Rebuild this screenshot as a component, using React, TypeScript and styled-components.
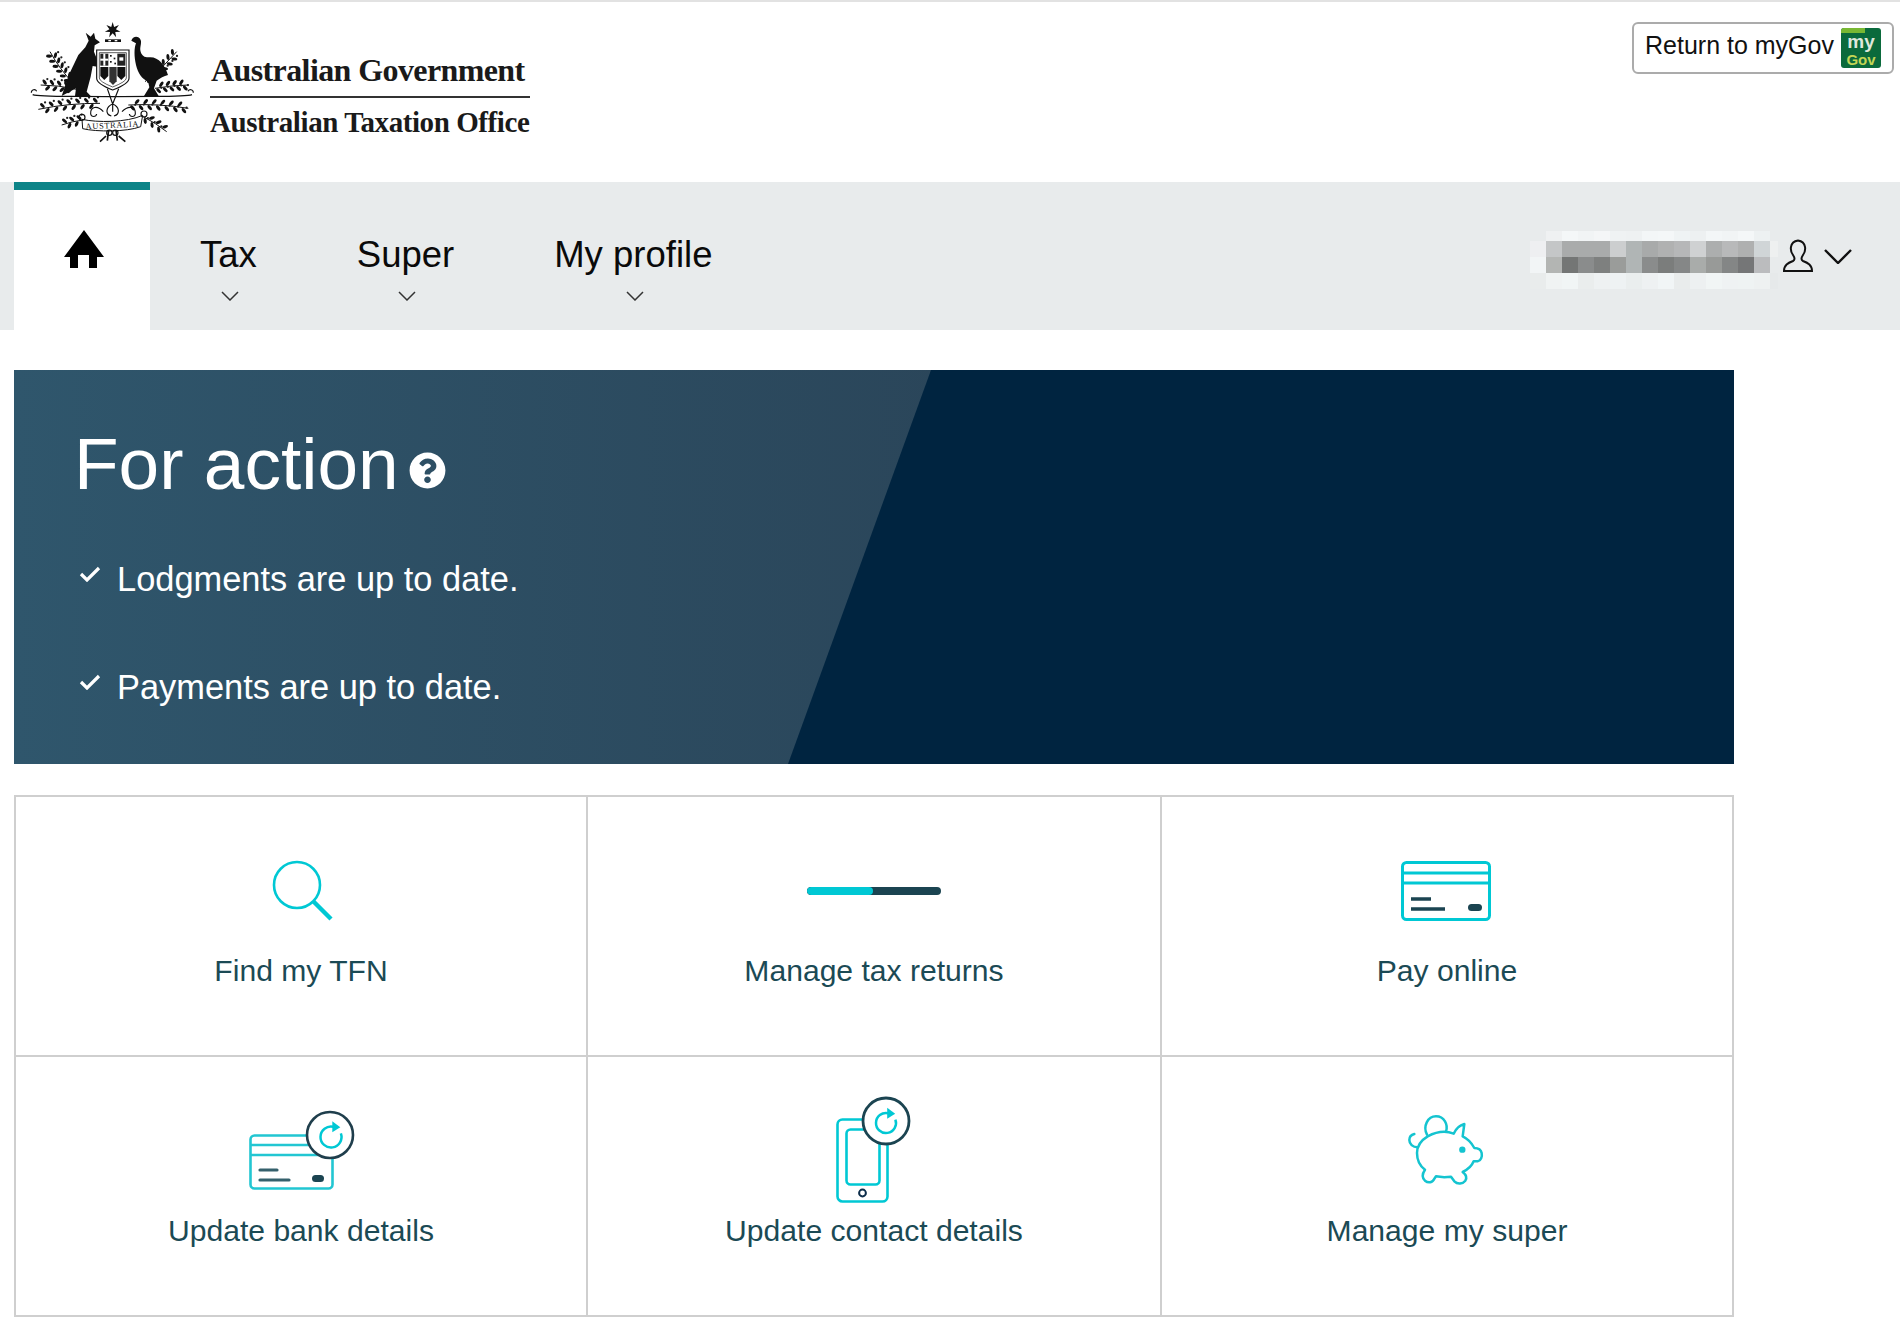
import React from "react";
import styled, { createGlobalStyle } from "styled-components";
import { FaQuestionCircle } from "react-icons/fa";

const GlobalStyle = createGlobalStyle`
  html, body { margin: 0; padding: 0; background: #fff; }
  body { font-family: "Liberation Sans", Arial, sans-serif; }
  * { box-sizing: border-box; }
`;

const CYAN = "#00c8d4";
const DARK = "#1b4451";

const Page = styled.div`
  width: 1900px;
  min-height: 1340px;
  border-top: 2px solid #e2e2e2;
`;

const Header = styled.header`
  height: 180px;
  display: flex;
  justify-content: space-between;
  align-items: flex-start;
  padding-right: 6px;
`;

const Brand = styled.div`
  display: flex;
  align-items: flex-start;
`;

const Crest = styled.svg`
  display: block;
  width: 190px;
  height: 140px;
  margin: 8px 0 0 20px;
`;

const BrandText = styled.div`
  width: 320px;
  padding-top: 50px;
  font-family: "Liberation Serif", "Times New Roman", serif;
  font-weight: 700;
  color: #1a1a1a;
`;

const GovLine = styled.div`
  font-size: 32px;
  letter-spacing: -0.6px;
  line-height: 36px;
  height: 46px;
  padding-left: 1px;
  border-bottom: 2px solid #333;
  white-space: nowrap;
`;

const OfficeLine = styled.div`
  font-size: 29px;
  letter-spacing: -0.42px;
  line-height: 34px;
  margin-top: 7px;
  white-space: nowrap;
`;

const ReturnButton = styled.a`
  margin-top: 20px;
  width: 262px;
  height: 52px;
  display: flex;
  align-items: center;
  justify-content: space-between;
  padding: 0 11px 0 11px;
  border: 2px solid #ababab;
  border-radius: 6px;
  font-size: 25px;
  color: #111;
  white-space: nowrap;
`;

const ReturnText = styled.span`
  margin-bottom: 5px;
`;

const GovBadge = styled.span`
  position: relative;
  width: 40px;
  height: 40px;
  flex: none;
  overflow: hidden;
  border-radius: 3px;
  background: #0b6a3c;
  display: flex;
  flex-direction: column;
  align-items: center;
  justify-content: flex-end;
  padding-bottom: 1px;
  font-weight: 700;
  &::before {
    content: "";
    position: absolute;
    left: 0;
    top: 0;
    width: 24px;
    height: 5px;
    background: #79b833;
  }
`;

const BadgeMy = styled.span`
  font-size: 19px;
  line-height: 20px;
  color: #dfe8dc;
`;

const BadgeGov = styled.span`
  font-size: 15px;
  line-height: 15px;
  color: #c3d655;
`;

const Nav = styled.nav`
  height: 148px;
  background: #e8ebec;
  display: flex;
  padding-left: 14px;
  padding-right: 48px;
`;

const HomeTab = styled.a`
  width: 136px;
  height: 148px;
  background: #fff;
  border-top: 8px solid #0d8488;
  display: flex;
  justify-content: center;
  padding: 40px 0 0 3px;
`;

const NavItem = styled.a`
  display: flex;
  flex-direction: column;
  align-items: center;
  padding: 53px 50px 0 50px;
  font-size: 36.5px;
  line-height: 40px;
  color: #0a0a0a;
  white-space: nowrap;
`;

const NavChevron = styled.svg`
  display: block;
  width: 18px;
  height: 10px;
  margin: 16px 0 0 3px;
`;

const UserArea = styled.div`
  margin-left: auto;
  display: flex;
  align-items: flex-start;
  padding-top: 49px;
`;

const Mosaic = styled.svg`
  display: block;
  width: 248px;
  height: 58px;
`;

const UserIcon = styled.svg`
  display: block;
  width: 30px;
  height: 34px;
  margin: 8px 0 0 5px;
`;

const UserChevron = styled.svg`
  display: block;
  width: 28px;
  height: 15px;
  margin: 18px 0 0 11px;
`;

const Main = styled.main`
  width: 1720px;
  margin-left: 14px;
`;

const Banner = styled.section`
  position: relative;
  height: 394px;
  margin-top: 40px;
  overflow: hidden;
  background: #002440;
  color: #fff;
  padding: 54px 0 0 60px;
  &::before {
    content: "";
    position: absolute;
    inset: 0;
    background: linear-gradient(to right, #2f566c, #2a4458 60%);
    clip-path: polygon(0 0, 917px 0, 774px 100%, 0 100%);
  }
`;

const BannerContent = styled.div`
  position: relative;
`;

const BannerTitle = styled.h1`
  margin: 0;
  display: flex;
  align-items: flex-start;
  font-size: 73px;
  font-weight: 400;
  line-height: 80px;
`;

const HelpIcon = styled(FaQuestionCircle)`
  width: 37px;
  height: 37px;
  margin: 28px 0 0 10px;
`;

const StatusList = styled.ul`
  list-style: none;
  margin: 55px 0 0;
  padding: 0;
  display: flex;
  flex-direction: column;
  gap: 68px;
`;

const StatusRow = styled.li`
  display: flex;
  align-items: flex-start;
  font-size: 34.4px;
  line-height: 40px;
`;

const CheckMark = styled.svg`
  display: block;
  width: 22px;
  height: 16px;
  margin: 7px 16px 0 5px;
`;

const Tiles = styled.section`
  margin-top: 31px;
  display: grid;
  grid-template-columns: 572px 574px 572px;
  border-top: 2px solid #cfcfcf;
  border-left: 2px solid #cfcfcf;
`;

const Tile = styled.a`
  height: 260px;
  border-right: 2px solid #cfcfcf;
  border-bottom: 2px solid #cfcfcf;
  display: flex;
  flex-direction: column;
  align-items: center;
  padding-top: 38px;
`;

const TileIcon = styled.div`
  height: 111px;
  display: flex;
  align-items: center;
  justify-content: center;
`;

const TileLabel = styled.div`
  font-size: 30.1px;
  line-height: 50px;
  color: #1b4a55;
  white-space: nowrap;
`;

const Progress = styled.div`
  width: 134px;
  height: 8px;
  border-radius: 4px;
  background: ${DARK};
  overflow: hidden;
`;

const ProgressFill = styled.div<{ $pct: number }>`
  width: ${(p) => p.$pct}%;
  height: 100%;
  border-radius: 4px;
  background: ${CYAN};
`;

const IconSvg = styled.svg`
  display: block;
  overflow: visible;
`;

const mosaicRows: { y: number; h: number; c: string[] }[] = [
  { y: 0, h: 10, c: ["e8ebec", "eff1f2", "f4f7f8", "f1f4f5", "f4f6f7", "eff2f3", "eef1f2", "f3f6f7", "f4f7f8", "eff3f4", "edf0f1", "f3f6f7", "f1f4f5", "f4f7f8", "edf1f2", "e8ebec"] },
  { y: 10, h: 16, c: ["eeeff1", "c4c6c7", "a9abab", "a9abab", "a9abab", "cccecf", "b0b5b5", "a8aaaa", "b0b1b1", "b6b7b8", "cfd1d2", "acaeae", "b8b9ba", "afb0b0", "d0d5d7", "eef0f0"] },
  { y: 26, h: 16, c: ["f2f5f6", "b3b5b3", "747675", "8a8c8c", "7e807f", "9a9c9a", "b0b5b5", "8a8c8c", "7b7d7c", "858787", "a9acaa", "989a98", "848686", "757677", "bbbcbe", "e8ebec"] },
  { y: 42, h: 16, c: ["e9ecec", "f0f3f3", "f1f5f5", "eaeded", "eef1f2", "eef2f3", "eaeeee", "eef1f2", "f1f5f6", "e9ecec", "edf0f1", "f1f5f5", "eff2f3", "eff3f3", "eef1f1", "e6e9ea"] },
];

const Sprig = ({ x1, y1, x2, y2, n, bend = 0 }: { x1: number; y1: number; x2: number; y2: number; n: number; bend?: number }) => {
  const dx = x2 - x1;
  const dy = y2 - y1;
  const len = Math.hypot(dx, dy);
  const nx = -dy / len;
  const ny = dx / len;
  const mx = (x1 + x2) / 2 + nx * bend;
  const my = (y1 + y2) / 2 + ny * bend;
  const angle = (Math.atan2(dy, dx) * 180) / Math.PI;
  const leaves = Array.from({ length: n }, (_, i) => {
    const t = (i + 1) / (n + 1);
    const px = (1 - t) * (1 - t) * x1 + 2 * t * (1 - t) * mx + t * t * x2;
    const py = (1 - t) * (1 - t) * y1 + 2 * t * (1 - t) * my + t * t * y2;
    const side = i % 2 === 0 ? 1 : -1;
    return { x: px + nx * side * 9, y: py + ny * side * 9, a: angle + side * 50, dot: i % 2 === 0 };
  });
  return (
    <g>
      <path d={`M${x1} ${y1}Q${mx} ${my} ${x2} ${y2}`} fill="none" stroke="#111" strokeWidth="3" />
      {leaves.map((l, i) => (
        <g key={i}>
          <ellipse cx={l.x} cy={l.y} rx="9" ry="4.6" fill="#111" transform={`rotate(${l.a} ${l.x} ${l.y})`} />
          {l.dot && <circle cx={l.x + 8} cy={l.y - 9} r="3.4" fill="#222" />}
        </g>
      ))}
    </g>
  );
};

const star = Array.from({ length: 14 }, (_, i) => {
  const r = i % 2 === 0 ? 24 : 10;
  const a = (i * Math.PI) / 7 - Math.PI / 2;
  return `${(278 + r * Math.cos(a)).toFixed(1)},${(60 + r * Math.sin(a)).toFixed(1)}`;
}).join(" ");

const CoatOfArms = () => (
  <Crest viewBox="0 0 570 420">
    <polygon points={star} fill="#111" />
    <rect x="255" y="88" width="48" height="8" fill="#111" />
    <rect x="265" y="90" width="8" height="4" fill="#fff" />
    <rect x="284" y="90" width="8" height="4" fill="#fff" />

    <Sprig x1={160} y1={220} x2={90} y2={125} n={12} bend={-8} />
    <Sprig x1={170} y1={238} x2={62} y2={225} n={9} bend={6} />
    <Sprig x1={375} y1={215} x2={470} y2={125} n={12} bend={8} />
    <Sprig x1={405} y1={235} x2={505} y2={225} n={9} bend={-4} />
    <Sprig x1={240} y1={280} x2={55} y2={298} n={13} bend={10} />
    <Sprig x1={325} y1={285} x2={505} y2={295} n={13} bend={-10} />
    <Sprig x1={190} y1={330} x2={125} y2={345} n={5} bend={4} />
    <Sprig x1={370} y1={320} x2={440} y2={365} n={6} bend={-4} />

    <path
      d="M197 68L212 80L222 68L226 86L240 97L224 106L222 125L232 150L232 170L218 168L212 200L200 245L212 258L165 258L168 235L125 258L146 196L175 135L196 112L206 92Z"
      fill="#111"
    />
    <path
      d="M334 92C338 78 356 76 362 90C366 100 358 112 362 125C366 138 375 143 388 142C415 140 435 165 444 195C432 198 420 205 410 212L402 235L416 258L372 258L388 232L384 214C366 208 354 190 348 165C342 140 342 115 348 100Z"
      fill="#111"
    />
    <path d="M34 248C34 238 46 236 50 244M520 248C520 238 508 236 504 244M38 254C60 262 130 258 280 260C430 258 495 262 516 254" fill="none" stroke="#111" strokeWidth="3.5" />

    <path d="M230 120H327V205Q327 222 278 240Q230 222 230 205Z" fill="#fff" stroke="#111" strokeWidth="3.5" />
    <path d="M238 128H319V204Q319 215 278 231Q238 215 238 204Z" fill="#fff" stroke="#111" strokeWidth="2" />
    <rect x="241" y="131" width="24" height="36" fill="#222" />
    <rect x="250" y="131" width="6" height="36" fill="#fff" />
    <rect x="241" y="146" width="24" height="6" fill="#fff" />
    <rect x="270" y="135" width="5" height="5" fill="#111" />
    <rect x="281" y="143" width="5" height="5" fill="#111" />
    <rect x="270" y="153" width="5" height="5" fill="#111" />
    <rect x="283" y="158" width="5" height="5" fill="#111" />
    <rect x="292" y="131" width="24" height="36" fill="#222" />
    <rect x="298" y="142" width="12" height="10" fill="#fff" />
    <path d="M241 171H265V198L253 210L241 198Z" fill="#111" />
    <path d="M268 171H290V214L279 225L268 214Z" fill="#333" />
    <path d="M292 171H316V198L304 210L292 198Z" fill="#111" />

    <path d="M262 236L278 282L296 236M278 282V305M250 305C232 284 210 290 212 312C214 322 228 322 230 312M306 305C326 284 348 290 346 312C344 322 330 322 328 312M278 282C258 290 254 312 274 318M278 282C298 290 302 312 282 318" fill="none" stroke="#111" strokeWidth="3.5" />

    <path d="M186 328C230 338 320 338 368 316L362 350C320 366 230 366 188 356Z" fill="#fff" stroke="#111" strokeWidth="3" />
    <circle cx="186" cy="322" r="9" fill="none" stroke="#111" strokeWidth="3.5" />
    <circle cx="372" cy="312" r="9" fill="none" stroke="#111" strokeWidth="3.5" />
    <text x="276" y="354" textAnchor="middle" fontFamily="'Liberation Serif', serif" fontSize="25" fill="#111" transform="rotate(-3 276 345)" textLength="158">AUSTRALIA</text>
    <path d="M258 378L240 395M296 378L316 395M266 360L262 392M288 360L292 392" stroke="#111" strokeWidth="5" fill="none" />
    <circle cx="268" cy="368" r="8" fill="none" stroke="#111" strokeWidth="3.5" />
    <circle cx="286" cy="368" r="8" fill="none" stroke="#111" strokeWidth="3.5" />
  </Crest>
);

const RefreshMark = ({ cx, cy, r }: { cx: number; cy: number; r: number }) => {
  const a0 = -0.35;
  const a1 = -1.35;
  const sx = cx + r * Math.cos(a0);
  const sy = cy + r * Math.sin(a0);
  const ex = cx + r * Math.cos(a1);
  const ey = cy + r * Math.sin(a1);
  return (
    <g>
      <path d={`M${sx} ${sy}A${r} ${r} 0 1 1 ${ex} ${ey}`} fill="none" stroke={CYAN} strokeWidth="2.5" />
      <path d={`M${ex - 1} ${ey - 5.5}L${ex + 7} ${ey + 0.5}L${ex - 1} ${ey + 5.5}Z`} fill={CYAN} />
    </g>
  );
};

const SearchIcon = () => (
  <IconSvg width="64" height="64" viewBox="-2 0 64 64">
    <circle cx="26" cy="26" r="23" fill="none" stroke={CYAN} strokeWidth="2.6" />
    <path d="M42 42L60 60" stroke={CYAN} strokeWidth="4.4" />
  </IconSvg>
);

const CardIcon = () => (
  <IconSvg width="90" height="62" viewBox="1 -1 90 62">
    <rect x="1.500" y="1.500" width="87" height="57" rx="4" fill="#fff" stroke={CYAN} strokeWidth="3" />
    <path d="M1 12H89M1 22H89" stroke={CYAN} strokeWidth="3" />
    <path d="M10 38H30M10 48H44" stroke={DARK} strokeWidth="3.4" />
    <rect x="67" y="43" width="14" height="7" rx="3.5" fill={DARK} />
  </IconSvg>
);

const BankIcon = () => (
  <IconSvg width="106" height="80" viewBox="-1 1 106 80">
    <rect x="1.500" y="25.500" width="82" height="53" rx="4" fill="#fff" stroke="#22c6d2" strokeWidth="2.6" />
    <path d="M1 35H84M1 45H84" stroke="#22c6d2" strokeWidth="2.6" />
    <path d="M11 60H28M11 70H40" stroke="#35606c" strokeWidth="3.2" strokeLinecap="round" />
    <rect x="63" y="65" width="12" height="7" rx="3.5" fill={DARK} />
    <circle cx="81" cy="25" r="23" fill="#fff" stroke="#1f3e4c" strokeWidth="2.6" />
    <RefreshMark cx={82} cy={27} r={10.5} />
  </IconSvg>
);

const PhoneIcon = () => (
  <IconSvg width="76" height="106" viewBox="0 1 76 106">
    <rect x="1.500" y="22.500" width="50" height="82" rx="5" fill="#fff" stroke={CYAN} strokeWidth="2.6" />
    <rect x="10.500" y="32.500" width="33" height="55" rx="4" fill="#fff" stroke={CYAN} strokeWidth="2.6" />
    <circle cx="26.500" cy="96" r="3.4" fill="#fff" stroke="#0d2d4a" strokeWidth="2" />
    <circle cx="50" cy="24" r="23" fill="#fff" stroke={DARK} strokeWidth="2.8" />
    <RefreshMark cx={50} cy={26} r={10} />
  </IconSvg>
);

const PiggyIcon = () => (
  <IconSvg width="110" height="100" viewBox="-7 -1 330 300">
    <g fill="none" stroke="#14c4d0" strokeWidth="7.5" strokeLinecap="round" strokeLinejoin="round">
      <path d="M178 97C155 88 125 92 100 105C80 117 68 135 68 155C68 178 78 195 92 205C85 215 82 228 92 238C102 246 115 244 120 232L125 225C140 228 155 228 170 226L180 240C190 250 205 248 213 238C218 230 215 220 205 212C220 205 232 195 238 180L250 180C260 178 264 165 262 155C260 145 250 140 240 140C232 125 220 112 205 105L210 68C195 72 185 82 178 97Z" />
      <path d="M70 138C55 138 45 128 45 116C45 106 52 100 60 98" />
      <path d="M98 100C85 75 100 45 125 45C150 45 162 70 155 90" />
    </g>
    <circle cx="204" cy="145" r="9.5" fill="#14c4d0" />
  </IconSvg>
);

const HomeGlyph = styled.svg`
  display: block;
  width: 40px;
  height: 38px;
`;

const tiles = [
  { label: "Find my TFN", icon: <SearchIcon /> },
  {
    label: "Manage tax returns",
    icon: (
      <Progress>
        <ProgressFill $pct={49} />
      </Progress>
    ),
  },
  { label: "Pay online", icon: <CardIcon /> },
  { label: "Update bank details", icon: <BankIcon /> },
  { label: "Update contact details", icon: <PhoneIcon /> },
  { label: "Manage my super", icon: <PiggyIcon /> },
];

const Chevron = () => (
  <NavChevron viewBox="0 0 18 10">
    <path d="M1 1L9 9L17 1" fill="none" stroke="#333" strokeWidth="1.5" />
  </NavChevron>
);

const Check = () => (
  <CheckMark viewBox="0 0 22 16">
    <path d="M2 8L8 14L20 2" fill="none" stroke="#fff" strokeWidth="3.2" />
  </CheckMark>
);

export default function App() {
  return (
    <Page>
      <GlobalStyle />
      <Header>
        <Brand>
          <CoatOfArms />
          <BrandText>
            <GovLine>Australian Government</GovLine>
            <OfficeLine>Australian Taxation Office</OfficeLine>
          </BrandText>
        </Brand>
        <ReturnButton>
          <ReturnText>Return to myGov</ReturnText>
          <GovBadge>
            <BadgeMy>my</BadgeMy>
            <BadgeGov>Gov</BadgeGov>
          </GovBadge>
        </ReturnButton>
      </Header>
      <Nav>
        <HomeTab>
          <HomeGlyph viewBox="0 0 40 38">
            <path d="M20 0L40 27H33V38H25V25H14V38H6V27H0Z" fill="#000" />
          </HomeGlyph>
        </HomeTab>
        <NavItem>
          Tax
          <Chevron />
        </NavItem>
        <NavItem>
          Super
          <Chevron />
        </NavItem>
        <NavItem>
          My profile
          <Chevron />
        </NavItem>
        <UserArea>
          <Mosaic viewBox="0 0 248 58">
            {mosaicRows.map((row) =>
              row.c.map((col, i) => (
                <rect key={`${row.y}-${i}`} x={i * 16} y={row.y} width={i === 15 ? 8 : 16} height={row.h} fill={`#${col}`} />
              ))
            )}
          </Mosaic>
          <UserIcon viewBox="0 0 30 34">
            <path
              d="M1 32C1 26 5 24 10 22C12 21 12 19 10 16C7 12 6 3 15 1.500C24 3 23 12 20 16C18 19 18 21 20 22C25 24 29 26 29 32Z"
              fill="none"
              stroke="#111"
              strokeWidth="2"
            />
          </UserIcon>
          <UserChevron viewBox="0 0 28 15">
            <path d="M1 1L14 14L27 1" fill="none" stroke="#111" strokeWidth="2.4" />
          </UserChevron>
        </UserArea>
      </Nav>
      <Main>
        <Banner>
          <BannerContent>
            <BannerTitle>
              For action
              <HelpIcon />
            </BannerTitle>
            <StatusList>
              <StatusRow>
                <Check />
                Lodgments are up to date.
              </StatusRow>
              <StatusRow>
                <Check />
                Payments are up to date.
              </StatusRow>
            </StatusList>
          </BannerContent>
        </Banner>
        <Tiles>
          {tiles.map((t) => (
            <Tile key={t.label}>
              <TileIcon>{t.icon}</TileIcon>
              <TileLabel>{t.label}</TileLabel>
            </Tile>
          ))}
        </Tiles>
      </Main>
    </Page>
  );
}
